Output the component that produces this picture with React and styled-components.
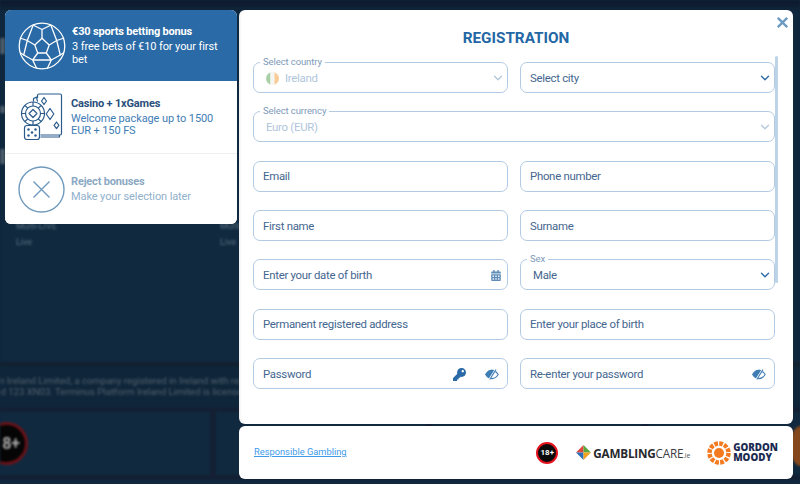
import React from "react";
import styled, { createGlobalStyle } from "styled-components";
import { FaKey, FaCalendarAlt } from "react-icons/fa";
import { FiChevronDown } from "react-icons/fi";

const GlobalStyle = createGlobalStyle`
  html, body {
    margin: 0;
    padding: 0;
    width: 800px;
    height: 484px;
    overflow: hidden;
    background: #10293f;
    font-family: Roboto, "Liberation Sans", sans-serif;
  }
  * {
    box-sizing: border-box;
  }
`;

const SoccerBall = () => (
  <svg width="48" height="48" viewBox="0 0 48 48" fill="none" stroke="#fff" strokeWidth="1.3" strokeLinejoin="round">
    <circle cx="24" cy="24" r="22.8" />
    <path d="M24 16.3l7.2 6.700-2.900 8H19.700l-2.900-8z" />
    <path d="M24 16.300V7.500L15 3M24 7.500L33 3" />
    <path d="M31.200 23l7.500-4.500 7.500-2.500M38.700 18.500L33 3.500M38.700 18.500L42.300 33l3-2" />
    <path d="M16.800 23l-7.500-4.500-7.500-2.500M9.300 18.500L15 3.500M9.300 18.500L5.700 33l-3-2" />
    <path d="M28.300 31l5 7 9-5M33.300 38l-4 8.500M19.700 31l-5 7-9-5M14.700 38l4 8.500M14.700 38h18.600" />
  </svg>
);

const CasinoIcon = () => (
  <svg width="46" height="48" viewBox="-1.500 0 46 48" fill="none" stroke="#2a5a8c" strokeWidth="1.2" strokeLinejoin="round">
    <path d="M17 5V2.500a1.500 1.500 0 0 1 1.500-1.500h21A1.500 1.500 0 0 1 41 2.500v38a1.500 1.500 0 0 1-1.500 1.500H20" />
    <path d="M13 8.500V5.500l3-1.400 1 4.500" />
    <path d="M23.500 4.500l2.500 3.500-2.500 3.500-2.500-3.500zM29.500 15.500l3.800 5.500-3.800 5.500-3.800-5.500zM36 29l2.400 3.300-2.400 3.300-2.400-3.300z" />
    <path d="M39 42v2H20" />
    <circle cx="12.500" cy="20.500" r="11.500" fill="#fff" />
    <circle cx="12.500" cy="20.500" r="7.500" />
    <path d="M12.500 16.500l4 4-4 4-4-4zM12.500 9v4M12.500 28v4M1 20.500h4M20 20.500h4M4.500 12.500l2.700 2.700M17.800 25.800l2.700 2.700M4.500 28.500l2.700-2.700M17.800 15.200l2.700-2.700" />
    <rect x="4" y="32.500" width="15" height="14" rx="2.500" fill="#fff" />
    <g fill="#2a5a8c" stroke="none">
      <circle cx="8" cy="36.500" r="1.200" />
      <circle cx="15" cy="36.500" r="1.200" />
      <circle cx="11.500" cy="39.500" r="1.200" />
      <circle cx="8" cy="42.500" r="1.200" />
      <circle cx="15" cy="42.500" r="1.200" />
    </g>
  </svg>
);

const RejectIcon = () => (
  <svg width="47" height="47" viewBox="0 0 47 47" fill="none" stroke="#6f9abd" strokeWidth="1.4">
    <circle cx="23.500" cy="23.500" r="22.500" />
    <path d="M15.500 15.500l16 16M31.500 15.500l-16 16" />
  </svg>
);

const IrishFlag = () => (
  <svg width="13" height="13" viewBox="0 0 13 13">
    <defs>
      <clipPath id="flag-clip">
        <circle cx="6.500" cy="6.500" r="6.500" />
      </clipPath>
    </defs>
    <g clipPath="url(#flag-clip)">
      <rect width="4.500" height="13" fill="#a9cfa5" />
      <rect x="4.500" width="4" height="13" fill="#f6f6f2" />
      <rect x="8.500" width="4.500" height="13" fill="#f8cc97" />
    </g>
  </svg>
);

const EyeSlash = () => (
  <EyeSvg width="14" height="11" viewBox="0 0 14 11" fill="none" stroke="#3f7db5" strokeWidth="1.100">
    <path d="M.8 5.500C2.800 2.400 4.800 1.400 7 1.400s4.200 1 6.200 4.100C11.200 8.600 9.200 9.600 7 9.600S2.800 8.600.8 5.500z" />
    <path d="M.8 5.500C2.800 2.400 4.800 1.400 7 1.400c1 0 1.900.2 2.800.7L5 9.300C3.500 8.900 2.200 7.700.8 5.500z" fill="#3f7db5" />
    <path d="M10.600.5L4.200 10.500" stroke="#fff" strokeWidth="1.600" />
    <path d="M11 .5L4.800 10.500" />
  </EyeSvg>
);

const GamblingCareMark = () => (
  <svg width="15" height="15" viewBox="0 0 15 15">
    <path d="M7.500 0L7.500 7.500 0 7.500z" fill="#e0483e" />
    <path d="M7.500 0L15 7.500 7.500 7.500z" fill="#58a83f" />
    <path d="M0 7.500L7.500 7.500 7.500 15z" fill="#2e6fb8" />
    <path d="M15 7.500L7.500 7.500 7.500 15z" fill="#f2a41f" />
  </svg>
);

const GordonMark = () => (
  <svg width="24" height="24" viewBox="0 0 24 24">
    <circle cx="12" cy="12" r="5" fill="#f47a20" />
    <circle cx="12" cy="12" r="9.500" fill="none" stroke="#f47a20" strokeWidth="4.500" strokeDasharray="3.700 1.270" />
  </svg>
);

const BONUSES = [
  { id: "sports", title: "€30 sports betting bonus", text: "3 free bets of €10 for your first bet", icon: <SoccerBall />, tone: "active", height: 71 },
  { id: "casino", title: "Casino + 1xGames", text: "Welcome package up to 1500 EUR + 150 FS", icon: <CasinoIcon />, tone: "normal", height: 72 },
  { id: "reject", title: "Reject bonuses", text: "Make your selection later", icon: <RejectIcon />, tone: "muted", height: 71 },
];

const App = () => {
  return (
    <>
      <GlobalStyle />
      <Page>
        <Backdrop>
          <TopBlur>
            <Streak mt={37} h={16} />
            <Streak mt={52} h={7} />
            <Streak mt={36} h={15} />
          </TopBlur>
          <MenuRows>
            <MenuRow>
              <span>Multi-LIVE</span>
              <span>Multi-LIVE</span>
            </MenuRow>
            <MenuRow>
              <span>Live</span>
              <span>Live</span>
            </MenuRow>
          </MenuRows>
          <Legal>
            <LegalLine offset={-75}>Terminus Platform Ireland Limited, a company registered in Ireland with reg</LegalLine>
            <LegalLine offset={-37}>registered 123 XN03. Terminus Platform Ireland Limited is licensed</LegalLine>
          </Legal>
          <Tiles>
            <Tile>
              <DimBadge>18+</DimBadge>
            </Tile>
            <Tile />
            <Tile />
            <Tile />
          </Tiles>
          <OrangeGlow />
        </Backdrop>

        <Overlay>
          <BonusPanel>
            {BONUSES.map((b) => (
              <BonusItem key={b.id} tone={b.tone} h={b.height}>
                <BonusIcon>{b.icon}</BonusIcon>
                <BonusCopy>
                  <BonusTitle tone={b.tone}>{b.title}</BonusTitle>
                  <BonusText tone={b.tone}>{b.text}</BonusText>
                </BonusCopy>
              </BonusItem>
            ))}
          </BonusPanel>

          <MainColumn>
            <FormPanel>
              <CloseBtn>
                <svg width="11" height="11" viewBox="0 0 11 11" stroke="#6c9bc2" strokeWidth="2.300">
                  <path d="M.8.8l9.400 9.400M10.200.8L.8 10.200" />
                </svg>
              </CloseBtn>
              <Title>REGISTRATION</Title>
              <ScrollArea>
                <FormGrid>
                  <Field legend="Select country">
                    <FlagSlot>
                      <IrishFlag />
                    </FlagSlot>
                    <Value disabled>Ireland</Value>
                    <Chevron disabled />
                  </Field>
                  <Field>
                    <Value>Select city</Value>
                    <Chevron />
                  </Field>
                  <Field wide legend="Select currency">
                    <Value disabled inset>Euro (EUR)</Value>
                    <Chevron disabled />
                  </Field>
                  <Field>
                    <Value>Email</Value>
                  </Field>
                  <Field>
                    <Value>Phone number</Value>
                  </Field>
                  <Field>
                    <Value>First name</Value>
                  </Field>
                  <Field>
                    <Value>Surname</Value>
                  </Field>
                  <Field>
                    <Value>Enter your date of birth</Value>
                    <CalendarIcon />
                  </Field>
                  <Field legend="Sex">
                    <Value inset>Male</Value>
                    <Chevron />
                  </Field>
                  <Field>
                    <Value>Permanent registered address</Value>
                  </Field>
                  <Field>
                    <Value>Enter your place of birth</Value>
                  </Field>
                  <Field>
                    <Value>Password</Value>
                    <KeyIcon />
                    <EyeSlash />
                  </Field>
                  <Field>
                    <Value>Re-enter your password</Value>
                    <EyeSlash />
                  </Field>
                </FormGrid>
                <ScrollThumb />
              </ScrollArea>
            </FormPanel>

            <FooterPanel>
              <ResponsibleLink>Responsible Gambling</ResponsibleLink>
              <Logos>
                <AgeBadge>18+</AgeBadge>
                <GamblingCare>
                  <GamblingCareMark />
                  <GcWord>
                    GAMBLING<GcLight>CARE</GcLight>
                    <GcSmall>.ie</GcSmall>
                  </GcWord>
                </GamblingCare>
                <Gordon>
                  <GordonMark />
                  <GordonWord>
                    <span>GORDON</span>
                    <span>MOODY</span>
                  </GordonWord>
                </Gordon>
              </Logos>
            </FooterPanel>
          </MainColumn>
        </Overlay>
      </Page>
    </>
  );
};

const Field = ({ legend, wide, children }) => (
  <FieldBox wide={wide ? 1 : 0}>
    {legend && <Legend>{legend}</Legend>}
    {children}
  </FieldBox>
);

const Page = styled.div`
  position: relative;
  width: 800px;
  height: 484px;
  overflow: hidden;
`;

const Backdrop = styled.div`
  position: relative;
  width: 100%;
  height: 100%;
  display: flex;
  flex-direction: column;
  background: #10293f;
  filter: blur(1.2px);
  box-shadow: inset 0 12px 6px -4px #0f1c2e;
`;

const TopBlur = styled.div`
  height: 218px;
  overflow: hidden;
  padding-top: 1px;
`;

const Streak = styled.div`
  width: 5px;
  height: ${(p) => p.h}px;
  margin-top: ${(p) => p.mt}px;
  background: #4a5a68;
`;

const MenuRows = styled.div`
  flex: 0 0 144px;
`;

const MenuRow = styled.div`
  display: grid;
  grid-template-columns: 204px 30px;
  padding-left: 16px;
  height: 16px;
  font-size: 9px;
  line-height: 16px;
  color: #5c6f80;
  white-space: nowrap;
`;

const Legal = styled.div`
  height: 50px;
  padding-top: 10px;
  background: #0f2539;
  border-top: 4px solid #12202f;
  border-bottom: 4px solid #131f33;
  overflow: hidden;
  white-space: nowrap;
`;

const LegalLine = styled.p`
  margin: 0 0 0 ${(p) => p.offset}px;
  font-size: 9.600px;
  line-height: 10.500px;
  color: #51626f;
`;

const Tiles = styled.div`
  display: flex;
  gap: 6px;
  height: 68px;
  background: #131f33;
  padding-bottom: 5px;
`;

const Tile = styled.div`
  flex: 0 0 210px;
  background: #10293f;
  display: flex;
  align-items: center;
  overflow: hidden;
`;

const DimBadge = styled.div`
  flex: none;
  width: 43px;
  height: 43px;
  margin-left: -15px;
  border-radius: 50%;
  background: #050505;
  border: 3px solid #6a1218;
  color: #a9a9a9;
  font-size: 16px;
  font-weight: 700;
  line-height: 37px;
  text-align: center;
`;

const OrangeGlow = styled.div`
  position: absolute;
  top: 426px;
  right: -12px;
  width: 22px;
  height: 40px;
  border-radius: 50%;
  background: #85481c;
`;

const Overlay = styled.div`
  position: absolute;
  inset: 0;
  display: flex;
  align-items: flex-start;
  gap: 2px;
  padding: 10px 7px 5px 5px;
`;

const BonusPanel = styled.div`
  flex: 0 0 232px;
  border-radius: 6px;
  overflow: hidden;
  background: #fff;
`;

const BonusItem = styled.div`
  display: flex;
  align-items: center;
  height: ${(p) => p.h}px;
  padding-left: 13px;
  background: ${(p) => (p.tone === "active" ? "#2a6aa6" : "#fff")};
  border-top: ${(p) => (p.tone === "muted" ? "1px solid #eef1f4" : "0")};
`;

const BonusIcon = styled.div`
  flex: 0 0 47px;
  height: 48px;
  margin-right: 6px;
  display: flex;
  align-items: center;
  justify-content: center;

  svg {
    display: block;
  }
`;

const BonusCopy = styled.div`
  padding-bottom: 1px;
`;

const BonusTitle = styled.div`
  font-size: 11px;
  font-weight: 700;
  line-height: 15px;
  letter-spacing: -0.17px;
  margin-bottom: 2px;
  color: ${(p) => (p.tone === "active" ? "#fff" : p.tone === "muted" ? "#8ba9c4" : "#2a4f7a")};
`;

const BonusText = styled.div`
  font-size: 11px;
  line-height: 12.500px;
  letter-spacing: -0.1px;
  width: 155px;
  color: ${(p) => (p.tone === "active" ? "#fff" : p.tone === "muted" ? "#8fb0cc" : "#3f7db5")};
`;

const MainColumn = styled.div`
  flex: 1;
  display: flex;
  flex-direction: column;
  gap: 2px;
`;

const FormPanel = styled.div`
  position: relative;
  height: 414px;
  padding: 18px 14px 0 14px;
  background: #fff;
  border-radius: 6px;
  box-shadow: inset 3px 0 3px -2px rgba(0, 0, 0, 0.08);
`;

const CloseBtn = styled.div`
  position: absolute;
  top: 7px;
  right: 5px;
  line-height: 0;
`;

const Title = styled.h2`
  margin: 0 0 13px;
  font-size: 15.300px;
  font-weight: 700;
  line-height: 21px;
  text-align: center;
  color: #2467a5;
`;

const ScrollArea = styled.div`
  position: relative;
`;

const ScrollThumb = styled.div`
  position: absolute;
  top: -6px;
  right: 1px;
  width: 3px;
  height: 227px;
  border-radius: 2px;
  background: #bcd3e8;
`;

const FormGrid = styled.div`
  display: grid;
  grid-template-columns: 255px 255px;
  column-gap: 12px;
  row-gap: 18.350px;
`;

const FieldBox = styled.div`
  position: relative;
  grid-column: ${(p) => (p.wide ? "1 / -1" : "auto")};
  height: 31px;
  display: flex;
  align-items: center;
  gap: 6px;
  padding: 1px 3px 0 9px;
  border: 1px solid #b2cbe3;
  border-radius: 7px;
  background: #fff;
`;

const Legend = styled.span`
  position: absolute;
  top: -7px;
  left: 6px;
  padding: 0 3px;
  font-size: 9.500px;
  line-height: 12px;
  letter-spacing: -0.1px;
  color: #7e9ab9;
  background: #fff;
`;

const FlagSlot = styled.span`
  display: flex;
  margin-left: 3px;
`;

const Value = styled.span`
  flex: 1;
  font-size: 11.400px;
  line-height: 17px;
  letter-spacing: -0.28px;
  padding-left: ${(p) => (p.inset ? "3px" : "0")};
  color: ${(p) => (p.disabled ? "#afc5da" : "#44668f")};
`;

const Chevron = styled(FiChevronDown)`
  flex: none;
  width: 14px;
  height: 14px;
  margin-right: -1px;
  stroke-width: 2.300;
  color: ${(p) => (p.disabled ? "#b2c8dc" : "#2a6aa6")};
`;

const CalendarIcon = styled(FaCalendarAlt)`
  flex: none;
  width: 10px;
  height: 11px;
  margin-right: 3px;
  color: #5f8db8;
`;

const KeyIcon = styled(FaKey)`
  flex: none;
  width: 13px;
  height: 13px;
  margin-right: 13px;
  color: #2a6aa6;
`;

const EyeSvg = styled.svg`
  flex: none;
  margin-right: 5px;
`;

const FooterPanel = styled.div`
  height: 53px;
  display: flex;
  align-items: center;
  justify-content: space-between;
  padding: 0 15px;
  background: #fff;
  border-radius: 6px;
`;

const ResponsibleLink = styled.a`
  margin-bottom: 2px;
  font-size: 9.300px;
  color: #3d9bea;
  text-decoration: underline;
`;

const Logos = styled.div`
  display: flex;
  align-items: center;
`;

const AgeBadge = styled.div`
  width: 22px;
  height: 22px;
  margin-right: 18px;
  border-radius: 50%;
  background: #0a0a0a;
  border: 2px solid #e5131f;
  color: #fff;
  font-size: 8px;
  font-weight: 700;
  line-height: 18px;
  text-align: center;
`;

const GamblingCare = styled.div`
  display: flex;
  align-items: center;
  gap: 2px;
  margin-right: 17px;
`;

const GcWord = styled.span`
  font-family: "Open Sans", sans-serif;
  font-size: 11.700px;
  font-weight: 700;
  letter-spacing: -0.2px;
  white-space: nowrap;
  color: #26282c;
`;

const GcLight = styled.span`
  font-weight: 400;
  color: #3a3d42;
`;

const GcSmall = styled.span`
  font-size: 7px;
  font-weight: 400;
  color: #5d6168;
`;

const Gordon = styled.div`
  display: flex;
  align-items: center;
  gap: 2px;
`;

const GordonWord = styled.div`
  display: flex;
  flex-direction: column;
  font-family: "Open Sans", sans-serif;
  font-size: 9.800px;
  font-weight: 800;
  color: #1c2b52;

  span {
    height: 10px;
    line-height: 10px;
  }
`;

export default App;
